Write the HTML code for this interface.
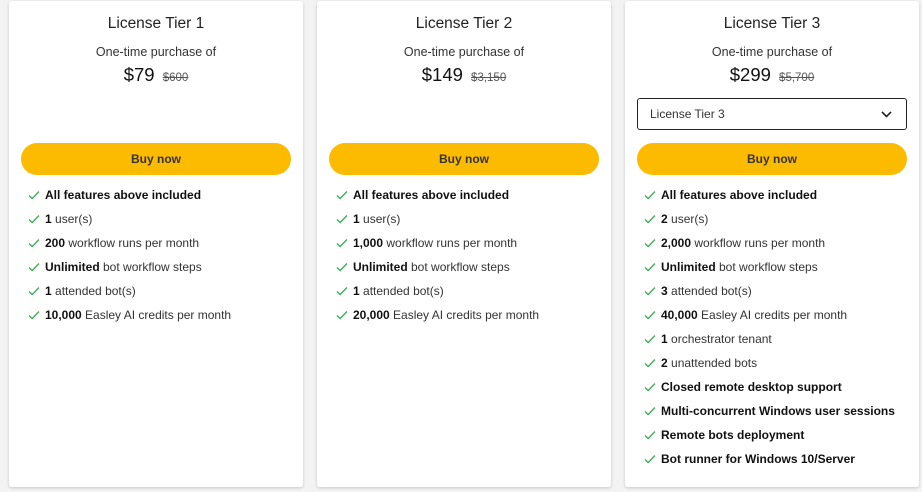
<!DOCTYPE html>
<html><head><style>
body{margin:0;width:922px;height:492px;background:#f3f3f3;font-family:"Liberation Sans",Arial,sans-serif;color:#222;position:relative;overflow:hidden}
.card{position:absolute;top:1px;width:294px;height:486px;background:#fff;border-radius:3px;box-shadow:0 1px 3px rgba(0,0,0,.18)}
.t{position:absolute;top:14px;left:0;right:0;text-align:center;font-size:15.5px;color:#222}
.s{position:absolute;top:44px;left:0;right:0;text-align:center;font-size:12.5px;color:#333}
.p{position:absolute;top:63px;left:0;right:0;text-align:center;font-size:18.5px;color:#111}
.p s{font-size:11.5px;color:#555;margin-left:3px}
.btn{position:absolute;top:142px;left:12px;width:270px;height:32px;border-radius:16px;background:#fdbb00;text-align:center;line-height:32px;font-size:12px;font-weight:bold;color:#333}
.dd{position:absolute;top:97px;left:12px;width:256px;height:30px;border:1px solid #222;border-radius:3px;font-size:12px;line-height:30px;padding-left:12px;color:#333}
.dd svg{position:absolute;right:14px;top:12px}
ul{position:absolute;top:185px;left:19px;margin:0;padding:0;list-style:none}
li{height:24px;font-size:12px;line-height:18px;color:#333;position:relative;padding-left:17px}
li b{color:#111}
li svg{position:absolute;left:0;top:4px}
</style></head><body>
<svg width="0" height="0" style="position:absolute"><defs><symbol id="c" viewBox="0 0 12 10"><path d="M1 5.5L4.2 8.5L11 1.5" fill="none" stroke="#3fae5c" stroke-width="1.4"/></symbol></defs></svg>

<div class="card" style="left:9px">
<div class="t">License Tier 1</div><div class="s">One-time purchase of</div>
<div class="p">$79 <s>$600</s></div>
<div class="btn">Buy now</div>
<ul>
<li><svg width="12" height="10"><use href="#c"/></svg><b>All features above included</b></li>
<li><svg width="12" height="10"><use href="#c"/></svg><b>1</b> user(s)</li>
<li><svg width="12" height="10"><use href="#c"/></svg><b>200</b> workflow runs per month</li>
<li><svg width="12" height="10"><use href="#c"/></svg><b>Unlimited</b> bot workflow steps</li>
<li><svg width="12" height="10"><use href="#c"/></svg><b>1</b> attended bot(s)</li>
<li><svg width="12" height="10"><use href="#c"/></svg><b>10,000</b> Easley AI credits per month</li>
</ul></div>

<div class="card" style="left:317px">
<div class="t">License Tier 2</div><div class="s">One-time purchase of</div>
<div class="p">$149 <s>$3,150</s></div>
<div class="btn">Buy now</div>
<ul>
<li><svg width="12" height="10"><use href="#c"/></svg><b>All features above included</b></li>
<li><svg width="12" height="10"><use href="#c"/></svg><b>1</b> user(s)</li>
<li><svg width="12" height="10"><use href="#c"/></svg><b>1,000</b> workflow runs per month</li>
<li><svg width="12" height="10"><use href="#c"/></svg><b>Unlimited</b> bot workflow steps</li>
<li><svg width="12" height="10"><use href="#c"/></svg><b>1</b> attended bot(s)</li>
<li><svg width="12" height="10"><use href="#c"/></svg><b>20,000</b> Easley AI credits per month</li>
</ul></div>

<div class="card" style="left:625px">
<div class="t">License Tier 3</div><div class="s">One-time purchase of</div>
<div class="p">$299 <s>$5,700</s></div>
<div class="dd">License Tier 3<svg width="11" height="7" viewBox="0 0 11 7"><path d="M1 1L5.5 5.5L10 1" fill="none" stroke="#222" stroke-width="1.6"/></svg></div>
<div class="btn">Buy now</div>
<ul>
<li><svg width="12" height="10"><use href="#c"/></svg><b>All features above included</b></li>
<li><svg width="12" height="10"><use href="#c"/></svg><b>2</b> user(s)</li>
<li><svg width="12" height="10"><use href="#c"/></svg><b>2,000</b> workflow runs per month</li>
<li><svg width="12" height="10"><use href="#c"/></svg><b>Unlimited</b> bot workflow steps</li>
<li><svg width="12" height="10"><use href="#c"/></svg><b>3</b> attended bot(s)</li>
<li><svg width="12" height="10"><use href="#c"/></svg><b>40,000</b> Easley AI credits per month</li>
<li><svg width="12" height="10"><use href="#c"/></svg><b>1</b> orchestrator tenant</li>
<li><svg width="12" height="10"><use href="#c"/></svg><b>2</b> unattended bots</li>
<li><svg width="12" height="10"><use href="#c"/></svg><b>Closed remote desktop support</b></li>
<li><svg width="12" height="10"><use href="#c"/></svg><b>Multi-concurrent Windows user sessions</b></li>
<li><svg width="12" height="10"><use href="#c"/></svg><b>Remote bots deployment</b></li>
<li><svg width="12" height="10"><use href="#c"/></svg><b>Bot runner for Windows 10/Server</b></li>
</ul></div>
</body></html>
